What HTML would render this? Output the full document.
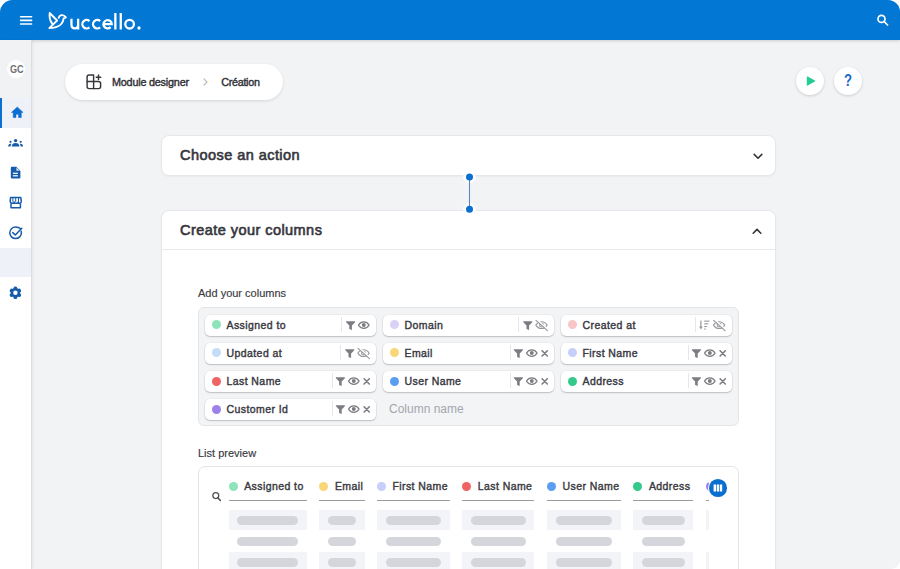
<!DOCTYPE html>
<html><head><meta charset="utf-8">
<style>
*{box-sizing:border-box;margin:0;padding:0}
html,body{width:900px;height:569px;overflow:hidden;background:#fff;font-family:"Liberation Sans",sans-serif}
#app{position:absolute;left:0;top:0;width:900px;height:569px;background:#f2f3f5;border-radius:12.5px 12px 9px 0;overflow:hidden}
.abs{position:absolute}
#hdr{left:0;top:0;width:900px;height:40px;background:#0277d4;box-shadow:0 1px 3px rgba(0,0,0,.16)}
#side{left:0;top:40px;width:32px;height:529px;background:#fff;border-right:1px solid #dcdde0;box-shadow:1px 0 3px rgba(0,0,0,.06)}
.card{position:absolute;background:#fff;border:1px solid #e6e7ea;border-radius:8px;box-shadow:0 1px 2px rgba(0,0,0,.04)}
.h{position:absolute;font-size:14.5px;color:#36363d;-webkit-text-stroke:.62px #36363d;letter-spacing:.45px;white-space:nowrap}
.lbl{position:absolute;font-size:11px;color:#38383f;-webkit-text-stroke:.15px #38383f;white-space:nowrap}
.chip{position:absolute;width:171px;height:21px;background:#fff;border-radius:5px;box-shadow:0 1px 1.5px rgba(0,0,0,.2),0 0 0 .6px rgba(0,0,0,.06)}
.chip .dot{position:absolute;left:6.7px;top:5.5px;width:9px;height:9px;border-radius:50%}
.chip .t{position:absolute;left:21.5px;top:4px;font-size:10.5px;color:#38383f;-webkit-text-stroke:.4px #38383f;letter-spacing:.42px;white-space:nowrap;line-height:13px}
.chip .sep{position:absolute;top:2px;width:1px;height:15px;background:#e6e7ea}
.chip svg{position:absolute;top:0;left:0}
.col{position:absolute;top:0}
.col .dot{position:absolute;top:482px;width:9px;height:9px;border-radius:50%}
.ph{position:absolute;font-size:10.5px;color:#3a3a41;-webkit-text-stroke:.4px #3a3a41;letter-spacing:.42px;white-space:nowrap;line-height:13px}
.ul{position:absolute;height:1px;background:#8e8f94;top:500px}
.cell{position:absolute;height:20px;background:#f3f4f7}
.bar{position:absolute;height:9px;border-radius:5px;background:#d4d6db}
</style></head><body>
<div id="app">
  <!-- header -->
  <div id="hdr" class="abs">
    <svg class="abs" style="left:0;top:0" width="900" height="40" viewBox="0 0 900 40">
      <g stroke="#fff" stroke-width="1.6" stroke-linecap="round" fill="none">
        <line x1="20.6" y1="16.8" x2="31.6" y2="16.8"/>
        <line x1="20.6" y1="20.4" x2="31.6" y2="20.4"/>
        <line x1="20.6" y1="24" x2="31.6" y2="24"/>
      </g>
      <!-- bird -->
      <path d="M58.7,17.9 C59.2,15.8 61,15 62.3,15.1 C63.6,15.2 64.8,16 65.9,17.4 L63.6,18.4 C63,23.8 58.5,28.1 49.3,28.1 L57.1,20.5 L49.7,13 C49.2,17 50.4,21.5 52.4,23.8" stroke="#fff" stroke-width="1.9" stroke-linejoin="round" stroke-linecap="round" fill="none"/>
      <!-- uccello. -->
      <g stroke="#fff" stroke-width="2.3" fill="none">
        <path d="M71.45,18.8 V24.6 C71.45,27 72.8,28.45 74.8,28.45 C76.8,28.45 78.15,27 78.15,24.6 M78.15,18.8 V29.6"/>
        <path d="M89.44,21.04 A4.25,4.25 0 1 0 89.44,27.36"/>
        <path d="M100.14,21.04 A4.25,4.25 0 1 0 100.14,27.36"/>
        <path d="M103.4,24.2 H111.75 A4.15,4.15 0 1 0 110.6,27.1"/>
        <path d="M115.35,12.9 V29.6 M120.75,12.9 V29.6"/>
        <circle cx="129.6" cy="24.2" r="4.3"/>
      </g>
      <circle cx="139" cy="28" r="1.65" fill="#fff"/>
      <!-- search -->
      <g stroke="#fff" stroke-width="1.7" fill="none" stroke-linecap="round">
        <circle cx="881.5" cy="18.9" r="3.5"/>
        <line x1="884.1" y1="21.5" x2="887.6" y2="25"/>
      </g>
    </svg>
  </div>

  <!-- sidebar -->
  <div id="side" class="abs">
    <div class="abs" style="left:0;top:0;width:31px;height:58px;background:#f1f2f4"></div>
    <div class="abs" style="left:6.7px;top:19.9px;width:18px;height:18px;border-radius:50%;background:#fff"></div>
    <div class="abs" style="left:9.7px;top:24px;font-size:10.8px;font-weight:bold;color:#707075;line-height:11px;transform-origin:0 0;transform:scaleX(.84);white-space:nowrap">GC</div>
    <div class="abs" style="left:0;top:58px;width:31px;height:30px;background:#eff1f9"></div>
    <div class="abs" style="left:0;top:58px;width:2px;height:30px;background:#0b6fcf"></div>
    <div class="abs" style="left:0;top:208px;width:31px;height:29px;background:#eff1f9"></div>
    <svg class="abs" style="left:0;top:0" width="31" height="300" viewBox="0 40 31 300">
      <!-- home -->
      <path d="M17.25,107 L11.4,112.4 H13.2 V117.5 H16 V114.3 H18.5 V117.5 H21.3 V112.4 H23.1 Z" fill="#0b6fcf" stroke="#0b6fcf" stroke-width=".5" stroke-linejoin="round"/>
      <!-- people -->
      <g fill="#175cab">
        <circle cx="15.6" cy="140.6" r="1.7"/>
        <path d="M11.8,146.6 C11.8,144 13.4,143 15.6,143 C17.8,143 19.4,144 19.4,146.6 Z"/>
        <circle cx="10.5" cy="141.8" r="1.1"/>
        <circle cx="20.7" cy="141.8" r="1.1"/>
        <path d="M8.2,146.6 C8.2,144.6 9,143.7 10.6,143.7 C11.2,143.7 11.4,143.9 11.4,144 C10.9,144.6 10.6,145.5 10.6,146.6 Z"/>
        <path d="M23,146.6 C23,144.6 22.2,143.7 20.6,143.7 C20,143.7 19.8,143.9 19.8,144 C20.3,144.6 20.6,145.5 20.6,146.6 Z"/>
      </g>
      <!-- document -->
      <path d="M11.9,166.8 H16.3 L20.4,170.9 V177.4 Q20.4,178.5 19.3,178.5 H11.9 Q10.8,178.5 10.8,177.4 V167.9 Q10.8,166.8 11.9,166.8 Z" fill="#175cab"/>
      <path d="M16.4,167.6 V170.8 H19.6 Z" fill="#cfe3fb"/>
      <rect x="12.9" y="172.7" width="5" height="1.2" fill="#fff"/>
      <rect x="12.9" y="175.2" width="5" height="1.2" fill="#fff"/>
      <!-- store -->
      <g stroke="#175cab" stroke-width="1.5" fill="none" stroke-linejoin="round">
        <path d="M10.6,197.6 H20.8 L21.3,201.6 C21.3,202.7 20.5,203.3 19.7,203.3 C18.9,203.3 18.2,202.7 18.2,201.9 C18.2,202.7 17.3,203.3 16.1,203.3 C15,203.3 14.1,202.7 14.1,201.9 C14.1,202.7 13.4,203.3 12.5,203.3 C11.7,203.3 10.1,202.7 10.1,201.6 Z"/>
        <path d="M11,203.3 V207.8 H20.4 V203.3"/>
        <path d="M12.9,197.8 V201.8 M15.7,197.8 V201.8 M18.5,197.8 V201.8" stroke-width="1"/>
      </g>
      <!-- check circle -->
      <g stroke="#175cab" stroke-width="1.5" fill="none" stroke-linecap="round" stroke-linejoin="round">
        <path d="M20.6,228.8 C19.5,227.6 17.7,227 15.6,227 C12.3,227 9.8,229.6 9.8,232.8 C9.8,236 12.3,238.6 15.6,238.6 C18.9,238.6 21.4,236 21.4,232.8 C21.4,232.2 21.3,231.7 21.2,231.2"/>
        <path d="M12.8,232.6 L15.3,235 L21.8,228.2"/>
      </g>
      <!-- gear -->
      <g fill="#175cab">
        <circle cx="15.4" cy="292.8" r="4.7"/>
        <g transform="translate(15.4 292.8)">
          <rect x="-1.9" y="-6.2" width="3.8" height="12.4" rx="1.6"/>
          <rect x="-1.9" y="-6.2" width="3.8" height="12.4" rx="1.6" transform="rotate(60)"/>
          <rect x="-1.9" y="-6.2" width="3.8" height="12.4" rx="1.6" transform="rotate(120)"/>
        </g>
        <circle cx="15.4" cy="292.8" r="2.2" fill="#fff"/>
      </g>
    </svg>
  </div>

  <!-- breadcrumb pill -->
  <div class="abs" style="left:65px;top:64px;width:218px;height:36px;border-radius:18px;background:#fff;box-shadow:0 1px 3px rgba(0,0,0,.12)"></div>
  <svg class="abs" style="left:80px;top:68px" width="30" height="28" viewBox="80 68 30 28">
    <g stroke="#36363c" stroke-width="1.45" fill="none" stroke-linejoin="round" stroke-linecap="round">
      <path d="M93.6,75 H89.1 Q87.1,75 87.1,77 V86.6 Q87.1,88.6 89.1,88.6 H93.6 Z"/>
      <path d="M87.1,81.5 H98.6 Q100.6,81.5 100.6,83.5 V86.6 Q100.6,88.6 98.6,88.6 H93.6"/>
      <path d="M98.5,75 V79.5 M96.25,77.25 H100.75"/>
    </g>
  </svg>
  <div id="bc1" class="abs" style="left:112px;top:75.5px;font-size:10.8px;color:#303036;-webkit-text-stroke:.4px #303036;letter-spacing:-.2px;white-space:nowrap;line-height:13px">Module designer</div>
  <svg class="abs" style="left:200px;top:74px" width="12" height="16" viewBox="0 0 12 16"><path d="M4,4.8 L7,8 L4,11.2" stroke="#b9bbc0" stroke-width="1.2" fill="none" stroke-linecap="round"/></svg>
  <div id="bc2" class="abs" style="left:221.2px;top:75.5px;font-size:10.8px;color:#303036;-webkit-text-stroke:.4px #303036;letter-spacing:-.3px;white-space:nowrap;line-height:13px">Création</div>

  <!-- play / help -->
  <div class="abs" style="left:796px;top:67px;width:28px;height:28px;border-radius:50%;background:#fff;box-shadow:0 1px 3px rgba(0,0,0,.16)"></div>
  <svg class="abs" style="left:796px;top:67px" width="28" height="28" viewBox="0 0 28 28"><path d="M11.4,10 L18.6,14 L11.4,18 Z" fill="#21cc95" stroke="#21cc95" stroke-width="1.2" stroke-linejoin="round"/></svg>
  <div class="abs" style="left:834px;top:67px;width:28px;height:28px;border-radius:50%;background:#fff;box-shadow:0 1px 3px rgba(0,0,0,.16)"></div>
  <div class="abs" style="left:843.6px;top:71.5px;font-size:16px;font-weight:bold;color:#1a68c8;line-height:18px;transform-origin:0 0;transform:scaleX(.82)">?</div>

  <!-- card 1 -->
  <div class="card" style="left:161px;top:135px;width:615px;height:41px"></div>
  <div class="h" style="left:180px;top:147px;line-height:17px">Choose an action</div>
  <svg class="abs" style="left:750.5px;top:151px" width="14" height="12" viewBox="0 0 14 12"><path d="M3.2,3.4 L7,7.2 L10.8,3.4" stroke="#34343b" stroke-width="1.6" fill="none" stroke-linecap="round" stroke-linejoin="round"/></svg>

  <!-- connector -->

  <!-- card 2 -->
  <div class="card" style="left:161px;top:209.5px;width:615px;height:380px"></div>
  <svg class="abs" style="left:455px;top:165px" width="30" height="56" viewBox="455 165 30 56">
    <circle cx="469.5" cy="177" r="6.5" fill="#fff" opacity=".75"/>
    <circle cx="469.5" cy="209.3" r="6.5" fill="#fff" opacity=".75"/>
    <line x1="469.5" y1="177" x2="469.5" y2="209.3" stroke="#5b88c6" stroke-width="1.1"/>
    <circle cx="469.5" cy="177" r="3.5" fill="#0a6fd0"/>
    <circle cx="469.5" cy="209.3" r="3.5" fill="#0a6fd0"/>
  </svg>
  <div class="h" style="left:180px;top:222px;line-height:17px">Create your columns</div>
  <svg class="abs" style="left:750px;top:225px" width="14" height="12" viewBox="0 0 14 12"><path d="M3.2,8.2 L7,4.4 L10.8,8.2" stroke="#34343b" stroke-width="1.6" fill="none" stroke-linecap="round" stroke-linejoin="round"/></svg>
  <div class="abs" style="left:162px;top:249px;width:613px;height:1px;background:#e8e9ec"></div>

  <div class="lbl" style="left:198px;top:287px;line-height:13px">Add your columns</div>

  <!-- columns box -->
  <div class="abs" style="left:198px;top:307px;width:541px;height:119px;background:#f3f4f6;border:1px solid #e4e5e8;border-radius:6px"></div>
  <div id="chips">
<div class="chip" style="left:205px;top:314.5px"><div class="dot" style="background:#8ee3b8"></div><div class="t">Assigned to</div><div class="sep" style="left:135.7px"></div><svg width="171" height="21" viewBox="0 0 171 21"><path d="M141,6.3 H150.2 Q150.2,7.2 149.6,7.8 L146.9,10.6 V15 L144.3,13.9 V10.6 L141.6,7.8 Q141,7.2 141,6.3 Z" fill="#7c7c82"/><path d="M153.5,10.1 C155.0,7.6 156.8,6.9 158.8,6.9 C160.8,6.9 162.60000000000002,7.6 164.10000000000002,10.1 C162.60000000000002,12.6 160.8,13.3 158.8,13.3 C156.8,13.3 155.0,12.6 153.5,10.1 Z" fill="none" stroke="#7c7c82" stroke-width="1.15" stroke-linejoin="round"/><circle cx="158.8" cy="10.1" r="2" fill="#7c7c82"/></svg></div>
<div class="chip" style="left:383px;top:314.5px"><div class="dot" style="background:#d9d2f6"></div><div class="t">Domain</div><div class="sep" style="left:135.4px"></div><svg width="171" height="21" viewBox="0 0 171 21"><path d="M140.2,6.3 H149.39999999999998 Q149.39999999999998,7.2 148.79999999999998,7.8 L146.1,10.6 V15 L143.5,13.9 V10.6 L140.79999999999998,7.8 Q140.2,7.2 140.2,6.3 Z" fill="#7c7c82"/><g fill="none" stroke="#98989e" stroke-width="1.15" stroke-linecap="round" stroke-linejoin="round"><path d="M152.9,10.1 C154.4,7.5 156.3,6.7 158.5,6.7 C160.7,6.7 162.6,7.5 164.1,10.1 C162.6,12.7 160.7,13.5 158.5,13.5 C156.3,13.5 154.4,12.7 152.9,10.1 Z"/><circle cx="158.5" cy="10.1" r="1.9"/><line x1="153.9" y1="4.6" x2="165.4" y2="15.2" stroke="#fff" stroke-width="1.6"/><line x1="153" y1="5.4" x2="164.4" y2="15.6" stroke-width="1.2"/></g></svg></div>
<div class="chip" style="left:561px;top:314.5px"><div class="dot" style="background:#f9c6c6"></div><div class="t">Created at</div><div class="sep" style="left:134.1px"></div><svg width="171" height="21" viewBox="0 0 171 21"><g fill="#98989e"><rect x="139.3" y="5.6" width="1.2" height="7"/><path d="M138.1,11.6 H141.7 L139.9,14.6 Z"/><rect x="143.2" y="5.6" width="5.3" height="1.1"/><rect x="143.2" y="8.3" width="4.1" height="1.1"/><rect x="143.2" y="11" width="2.9" height="1.1"/><rect x="143.2" y="13.5" width="1.6" height="1.1"/></g><g fill="none" stroke="#98989e" stroke-width="1.15" stroke-linecap="round" stroke-linejoin="round"><path d="M152.5,10.1 C154.0,7.5 155.9,6.7 158.1,6.7 C160.29999999999998,6.7 162.2,7.5 163.7,10.1 C162.2,12.7 160.29999999999998,13.5 158.1,13.5 C155.9,13.5 154.0,12.7 152.5,10.1 Z"/><circle cx="158.1" cy="10.1" r="1.9"/><line x1="153.5" y1="4.6" x2="165.0" y2="15.2" stroke="#fff" stroke-width="1.6"/><line x1="152.6" y1="5.4" x2="164.0" y2="15.6" stroke-width="1.2"/></g></svg></div>
<div class="chip" style="left:205px;top:342.8px"><div class="dot" style="background:#c3dcf8"></div><div class="t">Updated at</div><div class="sep" style="left:135.4px"></div><svg width="171" height="21" viewBox="0 0 171 21"><path d="M140.2,6.3 H149.39999999999998 Q149.39999999999998,7.2 148.79999999999998,7.8 L146.1,10.6 V15 L143.5,13.9 V10.6 L140.79999999999998,7.8 Q140.2,7.2 140.2,6.3 Z" fill="#7c7c82"/><g fill="none" stroke="#98989e" stroke-width="1.15" stroke-linecap="round" stroke-linejoin="round"><path d="M152.9,10.1 C154.4,7.5 156.3,6.7 158.5,6.7 C160.7,6.7 162.6,7.5 164.1,10.1 C162.6,12.7 160.7,13.5 158.5,13.5 C156.3,13.5 154.4,12.7 152.9,10.1 Z"/><circle cx="158.5" cy="10.1" r="1.9"/><line x1="153.9" y1="4.6" x2="165.4" y2="15.2" stroke="#fff" stroke-width="1.6"/><line x1="153" y1="5.4" x2="164.4" y2="15.6" stroke-width="1.2"/></g></svg></div>
<div class="chip" style="left:383px;top:342.8px"><div class="dot" style="background:#f8d778"></div><div class="t">Email</div><div class="sep" style="left:127px"></div><svg width="171" height="21" viewBox="0 0 171 21"><path d="M130.8,6.3 H140.0 Q140.0,7.2 139.4,7.8 L136.70000000000002,10.6 V15 L134.10000000000002,13.9 V10.6 L131.4,7.8 Q130.8,7.2 130.8,6.3 Z" fill="#7c7c82"/><path d="M143.5,10.1 C145.0,7.6 146.8,6.9 148.8,6.9 C150.8,6.9 152.60000000000002,7.6 154.10000000000002,10.1 C152.60000000000002,12.6 150.8,13.3 148.8,13.3 C146.8,13.3 145.0,12.6 143.5,10.1 Z" fill="none" stroke="#7c7c82" stroke-width="1.15" stroke-linejoin="round"/><circle cx="148.8" cy="10.1" r="2" fill="#7c7c82"/><path d="M159.10000000000002,7.8 L164.3,13 M164.3,7.8 L159.10000000000002,13" stroke="#7c7c82" stroke-width="1.6" stroke-linecap="round"/></svg></div>
<div class="chip" style="left:561px;top:342.8px"><div class="dot" style="background:#c5cffa"></div><div class="t">First Name</div><div class="sep" style="left:127px"></div><svg width="171" height="21" viewBox="0 0 171 21"><path d="M130.8,6.3 H140.0 Q140.0,7.2 139.4,7.8 L136.70000000000002,10.6 V15 L134.10000000000002,13.9 V10.6 L131.4,7.8 Q130.8,7.2 130.8,6.3 Z" fill="#7c7c82"/><path d="M143.5,10.1 C145.0,7.6 146.8,6.9 148.8,6.9 C150.8,6.9 152.60000000000002,7.6 154.10000000000002,10.1 C152.60000000000002,12.6 150.8,13.3 148.8,13.3 C146.8,13.3 145.0,12.6 143.5,10.1 Z" fill="none" stroke="#7c7c82" stroke-width="1.15" stroke-linejoin="round"/><circle cx="148.8" cy="10.1" r="2" fill="#7c7c82"/><path d="M159.10000000000002,7.8 L164.3,13 M164.3,7.8 L159.10000000000002,13" stroke="#7c7c82" stroke-width="1.6" stroke-linecap="round"/></svg></div>
<div class="chip" style="left:205px;top:371.1px"><div class="dot" style="background:#ee6363"></div><div class="t">Last Name</div><div class="sep" style="left:127px"></div><svg width="171" height="21" viewBox="0 0 171 21"><path d="M130.8,6.3 H140.0 Q140.0,7.2 139.4,7.8 L136.70000000000002,10.6 V15 L134.10000000000002,13.9 V10.6 L131.4,7.8 Q130.8,7.2 130.8,6.3 Z" fill="#7c7c82"/><path d="M143.5,10.1 C145.0,7.6 146.8,6.9 148.8,6.9 C150.8,6.9 152.60000000000002,7.6 154.10000000000002,10.1 C152.60000000000002,12.6 150.8,13.3 148.8,13.3 C146.8,13.3 145.0,12.6 143.5,10.1 Z" fill="none" stroke="#7c7c82" stroke-width="1.15" stroke-linejoin="round"/><circle cx="148.8" cy="10.1" r="2" fill="#7c7c82"/><path d="M159.10000000000002,7.8 L164.3,13 M164.3,7.8 L159.10000000000002,13" stroke="#7c7c82" stroke-width="1.6" stroke-linecap="round"/></svg></div>
<div class="chip" style="left:383px;top:371.1px"><div class="dot" style="background:#5a9ef1"></div><div class="t">User Name</div><div class="sep" style="left:127px"></div><svg width="171" height="21" viewBox="0 0 171 21"><path d="M130.8,6.3 H140.0 Q140.0,7.2 139.4,7.8 L136.70000000000002,10.6 V15 L134.10000000000002,13.9 V10.6 L131.4,7.8 Q130.8,7.2 130.8,6.3 Z" fill="#7c7c82"/><path d="M143.5,10.1 C145.0,7.6 146.8,6.9 148.8,6.9 C150.8,6.9 152.60000000000002,7.6 154.10000000000002,10.1 C152.60000000000002,12.6 150.8,13.3 148.8,13.3 C146.8,13.3 145.0,12.6 143.5,10.1 Z" fill="none" stroke="#7c7c82" stroke-width="1.15" stroke-linejoin="round"/><circle cx="148.8" cy="10.1" r="2" fill="#7c7c82"/><path d="M159.10000000000002,7.8 L164.3,13 M164.3,7.8 L159.10000000000002,13" stroke="#7c7c82" stroke-width="1.6" stroke-linecap="round"/></svg></div>
<div class="chip" style="left:561px;top:371.1px"><div class="dot" style="background:#35c98b"></div><div class="t">Address</div><div class="sep" style="left:127px"></div><svg width="171" height="21" viewBox="0 0 171 21"><path d="M130.8,6.3 H140.0 Q140.0,7.2 139.4,7.8 L136.70000000000002,10.6 V15 L134.10000000000002,13.9 V10.6 L131.4,7.8 Q130.8,7.2 130.8,6.3 Z" fill="#7c7c82"/><path d="M143.5,10.1 C145.0,7.6 146.8,6.9 148.8,6.9 C150.8,6.9 152.60000000000002,7.6 154.10000000000002,10.1 C152.60000000000002,12.6 150.8,13.3 148.8,13.3 C146.8,13.3 145.0,12.6 143.5,10.1 Z" fill="none" stroke="#7c7c82" stroke-width="1.15" stroke-linejoin="round"/><circle cx="148.8" cy="10.1" r="2" fill="#7c7c82"/><path d="M159.10000000000002,7.8 L164.3,13 M164.3,7.8 L159.10000000000002,13" stroke="#7c7c82" stroke-width="1.6" stroke-linecap="round"/></svg></div>
<div class="chip" style="left:205px;top:399.4px"><div class="dot" style="background:#9d80ea"></div><div class="t">Customer Id</div><div class="sep" style="left:127px"></div><svg width="171" height="21" viewBox="0 0 171 21"><path d="M130.8,6.3 H140.0 Q140.0,7.2 139.4,7.8 L136.70000000000002,10.6 V15 L134.10000000000002,13.9 V10.6 L131.4,7.8 Q130.8,7.2 130.8,6.3 Z" fill="#7c7c82"/><path d="M143.5,10.1 C145.0,7.6 146.8,6.9 148.8,6.9 C150.8,6.9 152.60000000000002,7.6 154.10000000000002,10.1 C152.60000000000002,12.6 150.8,13.3 148.8,13.3 C146.8,13.3 145.0,12.6 143.5,10.1 Z" fill="none" stroke="#7c7c82" stroke-width="1.15" stroke-linejoin="round"/><circle cx="148.8" cy="10.1" r="2" fill="#7c7c82"/><path d="M159.10000000000002,7.8 L164.3,13 M164.3,7.8 L159.10000000000002,13" stroke="#7c7c82" stroke-width="1.6" stroke-linecap="round"/></svg></div>
<div class="abs" style="left:389px;top:401.5px;font-size:12px;color:#a3a6ad;white-space:nowrap;line-height:14px">Column name</div>
</div><!--/chips-->

  <div class="lbl" style="left:198px;top:447px;line-height:13px">List preview</div>

  <!-- preview box -->
  <div class="abs" style="left:198px;top:466px;width:541px;height:120px;background:#fff;border:1px solid #e4e5e8;border-radius:7px"></div>
  <div id="preview">
<div class="abs" style="left:199px;top:467px;width:510px;height:102px;overflow:hidden">
<svg class="abs" style="left:0;top:0" width="40" height="40" viewBox="199 467 40 40"><g stroke="#4c4c52" stroke-width="1.25" fill="none" stroke-linecap="round"><circle cx="215.8" cy="495.6" r="2.95"/><line x1="218" y1="497.9" x2="220.4" y2="500.5" stroke-width="1.5"/></g></svg>
<div class="abs" style="left:29.599999999999994px;top:15.300000000000011px;width:9px;height:9px;border-radius:50%;background:#8ee3b8"></div>
<div class="ph" style="left:45.19999999999999px;top:13.199999999999989px">Assigned to</div>
<div class="abs" style="left:29.599999999999994px;top:32.60000000000002px;width:78.6px;height:1.4px;background:#9a9ba0"></div>
<div class="cell" style="left:29.599999999999994px;top:43px;width:78.6px"></div>
<div class="bar" style="left:38.400000000000006px;top:49px;width:60.99999999999999px"></div>
<div class="bar" style="left:38.400000000000006px;top:70px;width:60.99999999999999px"></div>
<div class="cell" style="left:29.599999999999994px;top:85px;width:78.6px"></div>
<div class="bar" style="left:38.400000000000006px;top:91px;width:60.99999999999999px"></div>
<div class="abs" style="left:120.30000000000001px;top:15.300000000000011px;width:9px;height:9px;border-radius:50%;background:#f8d778"></div>
<div class="ph" style="left:135.90000000000003px;top:13.199999999999989px">Email</div>
<div class="abs" style="left:120.30000000000001px;top:32.60000000000002px;width:45.69999999999999px;height:1.4px;background:#9a9ba0"></div>
<div class="cell" style="left:120.30000000000001px;top:43px;width:45.69999999999999px"></div>
<div class="bar" style="left:129.10000000000002px;top:49px;width:28.099999999999987px"></div>
<div class="bar" style="left:129.10000000000002px;top:70px;width:28.099999999999987px"></div>
<div class="cell" style="left:120.30000000000001px;top:85px;width:45.69999999999999px"></div>
<div class="bar" style="left:129.10000000000002px;top:91px;width:28.099999999999987px"></div>
<div class="abs" style="left:177.8px;top:15.300000000000011px;width:9px;height:9px;border-radius:50%;background:#c5cffa"></div>
<div class="ph" style="left:193.40000000000003px;top:13.199999999999989px">First Name</div>
<div class="abs" style="left:177.8px;top:32.60000000000002px;width:73.19999999999999px;height:1.4px;background:#9a9ba0"></div>
<div class="cell" style="left:177.8px;top:43px;width:73.19999999999999px"></div>
<div class="bar" style="left:186.60000000000002px;top:49px;width:55.59999999999999px"></div>
<div class="bar" style="left:186.60000000000002px;top:70px;width:55.59999999999999px"></div>
<div class="cell" style="left:177.8px;top:85px;width:73.19999999999999px"></div>
<div class="bar" style="left:186.60000000000002px;top:91px;width:55.59999999999999px"></div>
<div class="abs" style="left:263.2px;top:15.300000000000011px;width:9px;height:9px;border-radius:50%;background:#ee6363"></div>
<div class="ph" style="left:278.8px;top:13.199999999999989px">Last Name</div>
<div class="abs" style="left:263.2px;top:32.60000000000002px;width:72.19999999999999px;height:1.4px;background:#9a9ba0"></div>
<div class="cell" style="left:263.2px;top:43px;width:72.19999999999999px"></div>
<div class="bar" style="left:272.0px;top:49px;width:54.59999999999999px"></div>
<div class="bar" style="left:272.0px;top:70px;width:54.59999999999999px"></div>
<div class="cell" style="left:263.2px;top:85px;width:72.19999999999999px"></div>
<div class="bar" style="left:272.0px;top:91px;width:54.59999999999999px"></div>
<div class="abs" style="left:348px;top:15.300000000000011px;width:9px;height:9px;border-radius:50%;background:#5a9ef1"></div>
<div class="ph" style="left:363.6px;top:13.199999999999989px">User Name</div>
<div class="abs" style="left:348px;top:32.60000000000002px;width:74.20000000000005px;height:1.4px;background:#9a9ba0"></div>
<div class="cell" style="left:348px;top:43px;width:74.20000000000005px"></div>
<div class="bar" style="left:356.79999999999995px;top:49px;width:56.600000000000044px"></div>
<div class="bar" style="left:356.79999999999995px;top:70px;width:56.600000000000044px"></div>
<div class="cell" style="left:348px;top:85px;width:74.20000000000005px"></div>
<div class="bar" style="left:356.79999999999995px;top:91px;width:56.600000000000044px"></div>
<div class="abs" style="left:434.29999999999995px;top:15.300000000000011px;width:9px;height:9px;border-radius:50%;background:#35c98b"></div>
<div class="ph" style="left:449.9px;top:13.199999999999989px">Address</div>
<div class="abs" style="left:434.29999999999995px;top:32.60000000000002px;width:60.200000000000045px;height:1.4px;background:#9a9ba0"></div>
<div class="cell" style="left:434.29999999999995px;top:43px;width:60.200000000000045px"></div>
<div class="bar" style="left:443.0999999999999px;top:49px;width:42.600000000000044px"></div>
<div class="bar" style="left:443.0999999999999px;top:70px;width:42.600000000000044px"></div>
<div class="cell" style="left:434.29999999999995px;top:85px;width:60.200000000000045px"></div>
<div class="bar" style="left:443.0999999999999px;top:91px;width:42.600000000000044px"></div>
<div class="abs" style="left:506.6px;top:15.300000000000011px;width:9px;height:9px;border-radius:50%;background:#9d80ea"></div>
<div class="abs" style="left:506.6px;top:32.60000000000002px;width:10px;height:1.4px;background:#9a9ba0"></div>
<div class="cell" style="left:506.6px;top:43px;width:10px"></div>
<div class="cell" style="left:506.6px;top:85px;width:10px"></div>
</div>
<div class="abs" style="left:707.5px;top:477.5px;width:20.6px;height:20.6px;border-radius:50%;background:#fff"></div>
<div class="abs" style="left:709px;top:479px;width:17.6px;height:17.6px;border-radius:50%;background:#0b6fcf"></div>
<svg class="abs" style="left:709px;top:479px" width="18" height="18" viewBox="0 0 18 18"><g fill="#fff"><rect x="4.6" y="5.5" width="2.4" height="7"/><rect x="7.7" y="5.5" width="2.4" height="7"/><rect x="10.8" y="5.5" width="2.4" height="7"/></g></svg>
</div><!--/preview-->
</div>
</body></html>
